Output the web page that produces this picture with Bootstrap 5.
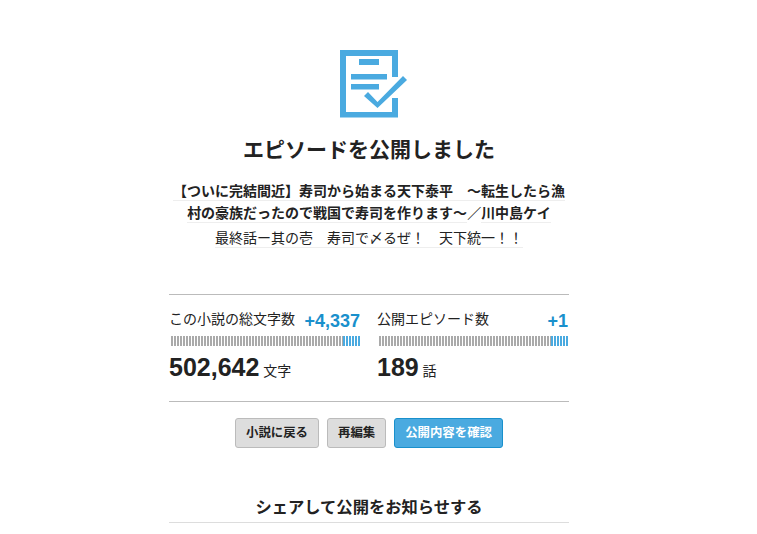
<!DOCTYPE html>
<html lang="ja">
<head>
<meta charset="utf-8">
<title>エピソードを公開しました</title>
<link href="https://cdn.jsdelivr.net/npm/bootstrap@5.3.0/dist/css/bootstrap.min.css" rel="stylesheet">
<style>
html,body{height:534px;overflow:hidden;background:#fff}
body{font-family:"Liberation Sans","Noto Sans CJK JP",sans-serif;color:#222;font-size:14px;line-height:1.5}
.pg{width:738px}
.wrapx{width:400px;margin:0 auto}
.ico{display:block;margin:50px 0 0 171px;width:68px;height:68px}
.ttl{font-size:21px;font-weight:700;line-height:28px;margin:18px 0 0;color:#222}
.nov{margin:16px 0 0;font-size:14px;font-weight:700;line-height:22px}
.nov span,.ep span{border-bottom:1px solid #eee;padding-bottom:1px}
.ep{margin:2px 0 0;font-size:14px;line-height:25px}
.stats{margin-top:43px;border-top:1px solid #bbb;border-bottom:1px solid #bbb;height:108px;padding-top:10px;gap:17px}
.stat,.stat2{width:191px}
.lab{height:31px;align-items:flex-start;font-size:14px;line-height:28px}
.lab b{color:#1990cc;font-size:18px;line-height:22px;margin-top:5px}
.bar{height:10px;margin:0 0 0 2px;display:flex;background:repeating-linear-gradient(90deg,#aaa 0 2px,#fff 2px 3px)}
.bar i{margin-left:auto;width:17px;height:10px;background:repeating-linear-gradient(90deg,#4aaae0 0 2px,#fff 2px 3px)}
.num{margin-top:5px;line-height:32px;font-size:14px}
.num b{font-size:25px}
.acts{gap:8px;margin-top:16px}
.bt{font-size:12.4px;font-weight:700;padding:0 10px;height:30px;line-height:28px;border-radius:3px;color:#222;background:#ddd;border:1px solid #bbb}
.bt:hover{color:#222;background:#ddd;border-color:#bbb}
.btp,.btp:hover{background:#4aaae0;border-color:#1990cc;color:#fff}
.shr{font-size:16.3px;font-weight:700;line-height:24px;margin:47px 0 0;padding-bottom:3px;border-bottom:1px solid #ddd}
</style>
</head>
<body>
<div class="pg">
<div class="wrapx text-center">
<svg class="ico" viewBox="0 0 68 68" fill="#4aaae0">
<path d="M0 0H58V27H52V6H6V62H52V48H58V67.5H0Z"/>
<rect x="19" y="9" width="20" height="6"/>
<rect x="11" y="24" width="36" height="5.5"/>
<rect x="11" y="34" width="28" height="5.5"/>
<path d="M24 46L28 42L37.5 52L63 26L67 30L37.5 58Z"/>
</svg>
<h1 class="ttl">エピソードを公開しました</h1>
<p class="nov"><span>【ついに完結間近】寿司から始まる天下泰平　～転生したら漁</span><br><span>村の豪族だったので戦国で寿司を作ります～</span>／<span>川中島ケイ</span></p>
<p class="ep"><span>最終話ー其の壱　寿司で〆るぜ！　天下統一！！</span></p>
<div class="stats d-flex text-start">
<div class="stat">
<div class="lab d-flex justify-content-between"><span>この小説の総文字数</span><b>+4,337</b></div>
<div class="bar"><i></i></div>
<div class="num"><b>502,642</b> 文字</div>
</div>
<div class="stat2">
<div class="lab d-flex justify-content-between"><span>公開エピソード数</span><b>+1</b></div>
<div class="bar"><i></i></div>
<div class="num"><b>189</b> 話</div>
</div>
</div>
<div class="acts d-flex justify-content-center">
<a class="btn bt" href="#">小説に戻る</a>
<a class="btn bt" href="#">再編集</a>
<a class="btn bt btp" href="#">公開内容を確認</a>
</div>
<h2 class="shr">シェアして公開をお知らせする</h2>
</div>
</div>
<script src="https://cdn.jsdelivr.net/npm/bootstrap@5.3.0/dist/js/bootstrap.bundle.min.js"></script>
</body>
</html>
